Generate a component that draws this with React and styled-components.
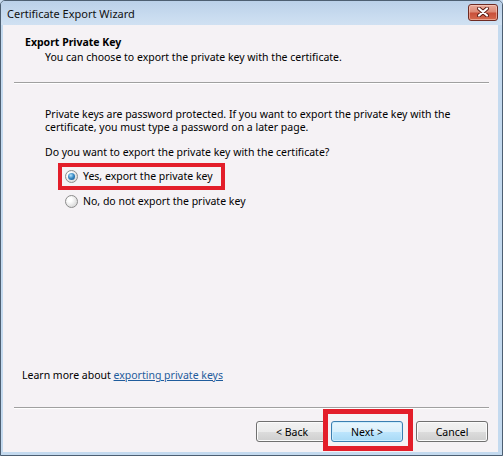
import React from "react";
import styled, { createGlobalStyle, css } from "styled-components";

const GlobalStyle = createGlobalStyle`
  html, body {
    margin: 0;
    padding: 0;
    background: #c9dcf0;
  }
  body {
    font-family: "Noto Sans", "Open Sans", sans-serif;
    font-size: 10.5px;
    color: #000;
  }
`;

const App = () => {
  return (
    <>
      <GlobalStyle />
      <Window>
        <TitleBar>
          <Title>Certificate Export Wizard</Title>
          <CloseButton aria-label="Close">
            <svg width="12" height="10" viewBox="0 0 12 10">
              <path
                d="M2 1.5 L10 8.5 M10 1.5 L2 8.5"
                stroke="#5a1a12"
                strokeWidth="4"
                strokeLinecap="round"
              />
              <path
                d="M2 1.5 L10 8.5 M10 1.5 L2 8.5"
                stroke="#fff"
                strokeWidth="2.2"
                strokeLinecap="round"
              />
            </svg>
          </CloseButton>
        </TitleBar>
        <Client>
          <Header>
            <PageTitle>Export Private Key</PageTitle>
            <PageSubtitle>
              You can choose to export the private key with the certificate.
            </PageSubtitle>
          </Header>
          <Rule />
          <Main>
            <Para>
              Private keys are password protected. If you want to export the
              private key with the certificate, you must type a password on a
              later page.
            </Para>
            <Question>Do you want to export the private key with the certificate?</Question>
            <Options>
              <OptionRow marked>
                <Radio checked />
                <span>Yes, export the private key</span>
              </OptionRow>
              <OptionRow>
                <Radio />
                <span>No, do not export the private key</span>
              </OptionRow>
            </Options>
          </Main>
          <Learn>
            Learn more about <Link href="#">exporting private keys</Link>
          </Learn>
          <Rule />
          <Footer>
            <Button>&lt; Back</Button>
            <ButtonSlot marked>
              <Button primary>Next &gt;</Button>
            </ButtonSlot>
            <Button>Cancel</Button>
          </Footer>
        </Client>
      </Window>
    </>
  );
};

export default App;

const marker = css`
  position: relative;
  &::after {
    content: "";
    position: absolute;
    border: 4px solid #e31e2a;
    pointer-events: none;
  }
`;

const Window = styled.div`
  width: 503px;
  height: 456px;
  box-sizing: border-box;
  border: 1px solid #4d5f72;
  border-radius: 5px 5px 0 0;
  background: #c4daef;
  display: flex;
  flex-direction: column;
  overflow: hidden;
`;

const TitleBar = styled.div`
  height: 24px;
  flex-shrink: 0;
  display: flex;
  align-items: center;
  justify-content: space-between;
  padding: 0 4px 0 6px;
  background: linear-gradient(to bottom, #bad0e9, #c8dbef 60%, #d0e1f2);
`;

const Title = styled.div`
  font-size: 11px;
  color: #111;
`;

const CloseButton = styled.div`
  width: 30px;
  height: 17px;
  box-sizing: border-box;
  margin-top: -2px;
  border: 1px solid #6e2a22;
  border-radius: 3px;
  display: flex;
  align-items: center;
  justify-content: center;
  background: linear-gradient(
    to bottom,
    #e9aa9a 0%,
    #dd8a76 45%,
    #c9503a 55%,
    #d66a4e 100%
  );
  box-shadow: inset 0 0 0 1px rgba(255, 220, 210, 0.5);
`;

const Client = styled.div`
  flex: 1;
  margin: 0 4px 3px 2px;
  background: #f5f2f5;
  display: flex;
  flex-direction: column;
`;

const Header = styled.div`
  height: 57px;
  box-sizing: border-box;
  padding: 10px 0 0 22px;
  line-height: 15px;
`;

const PageTitle = styled.div`
  font-weight: bold;
`;

const PageSubtitle = styled.div`
  padding-left: 20px;
`;

const Rule = styled.div`
  margin: 0 9px 0 11px;
  border-top: 1px solid #a0a0a0;
  border-bottom: 1px solid #ffffff;
`;

const Main = styled.div`
  flex: 1;
  padding: 24px 30px 0 42px;
  line-height: 13px;
`;

const Para = styled.p`
  margin: 0;
`;

const Question = styled.p`
  margin: 12px 0 0;
`;

const Options = styled.div`
  display: flex;
  flex-direction: column;
  align-items: flex-start;
  gap: 12px;
  margin: 11px 0 0 20px;
`;

const OptionRow = styled.label`
  display: inline-flex;
  align-items: center;
  gap: 5px;
  height: 13px;
  ${(p) =>
    p.marked &&
    css`
      ${marker}
      &::after {
        inset: -7px -12px -7px -7px;
      }
    `}
`;

const Radio = styled.span`
  width: 13px;
  height: 13px;
  box-sizing: border-box;
  border-radius: 50%;
  border: 1px solid #8c8c8c;
  background: radial-gradient(circle at 35% 35%, #ffffff 20%, #e4e4e4 60%, #cfcfcf);
  position: relative;
  flex-shrink: 0;
  ${(p) =>
    p.checked &&
    css`
      &::after {
        content: "";
        position: absolute;
        left: 2px;
        top: 2px;
        width: 7px;
        height: 7px;
        border-radius: 50%;
        background: radial-gradient(
          circle at 40% 35%,
          #b8e4fb 0%,
          #3b8cc6 45%,
          #0f4a80 100%
        );
      }
    `}
`;

const Learn = styled.div`
  padding: 0 0 0 19px;
  line-height: 13px;
  margin-bottom: 25px;
`;

const Link = styled.a`
  color: #1f5c9c;
  text-decoration: underline;
`;

const Footer = styled.div`
  display: flex;
  justify-content: flex-end;
  align-items: center;
  padding: 12px 10px 10px 0;
  gap: 3px;
  & > :last-child {
    margin-left: 10px;
  }
`;

const ButtonSlot = styled.div`
  display: flex;
  ${(p) =>
    p.marked &&
    css`
      ${marker}
      &::after {
        inset: -12px -10px -9px -8px;
        border-width: 5px;
      }
    `}
`;

const Button = styled.button`
  width: 72px;
  height: 21px;
  box-sizing: border-box;
  padding: 0;
  font-family: "Noto Sans", "Open Sans", sans-serif;
  font-size: 10.5px;
  color: #000;
  border: 1px solid #707070;
  border-radius: 3px;
  background: linear-gradient(
    to bottom,
    #f2f2f2 0%,
    #ebebeb 50%,
    #dddddd 50%,
    #cfcfcf 100%
  );
  box-shadow: inset 0 0 0 1px #fbfbfb;
  ${(p) =>
    p.primary &&
    css`
      border-color: #3c7fb1;
      background: linear-gradient(
        to bottom,
        #eaf6fd 0%,
        #d9f0fc 50%,
        #bee6fd 50%,
        #a7d9f5 100%
      );
      box-shadow: inset 0 0 0 1px #cdeefe;
    `}
`;
